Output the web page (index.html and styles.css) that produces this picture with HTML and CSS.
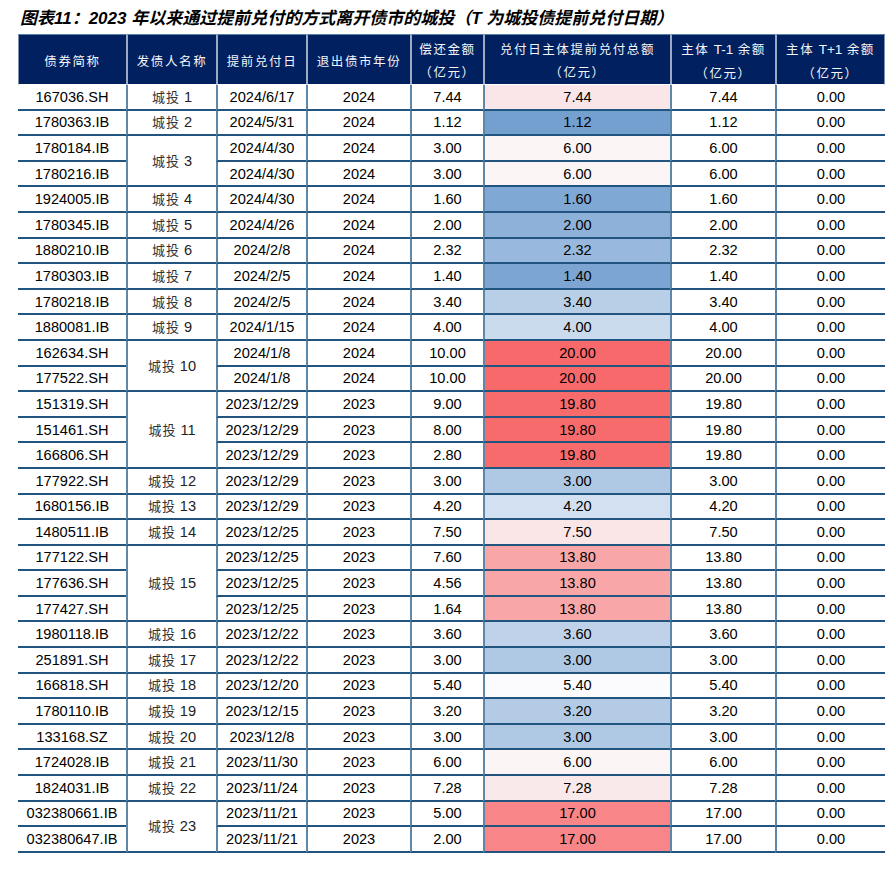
FILE: index.html
```html
<!DOCTYPE html>
<html lang="zh-CN">
<head>
<meta charset="utf-8">
<title>图表11</title>
<link rel="stylesheet" href="styles.css">
</head>
<body>
<div class="page">
<h1 class="title">图表11：2023 年以来通过提前兑付的方式离开债市的城投（T 为城投债提前兑付日期）</h1>
<table class="grid">
<colgroup>
<col class="w1"><col class="w2"><col class="w3"><col class="w4"><col class="w5"><col class="w6"><col class="w7"><col class="w8">
</colgroup>
<thead>
<tr>
<th>债券简称</th><th>发债人名称</th><th>提前兑付日</th><th>退出债市年份</th>
<th>偿还金额<br>（亿元）</th><th>兑付日主体提前兑付总额<br>（亿元）</th><th>主体 <span class="lat">T-1</span> 余额<br>（亿元）</th><th>主体 <span class="lat">T+1</span> 余额<br>（亿元）</th>
</tr>
</thead>
<tbody>
<tr><td class="first">167036.SH</td><td class="iss">城投 <span class="lat">1</span></td><td>2024/6/17</td><td>2024</td><td>7.44</td><td class="c744">7.44</td><td>7.44</td><td>0.00</td></tr>
<tr><td class="first">1780363.IB</td><td class="iss">城投 <span class="lat">2</span></td><td>2024/5/31</td><td>2024</td><td>1.12</td><td class="c112">1.12</td><td>1.12</td><td>0.00</td></tr>
<tr><td class="first">1780184.IB</td><td class="iss" rowspan="2">城投 <span class="lat">3</span></td><td>2024/4/30</td><td>2024</td><td>3.00</td><td class="c600">6.00</td><td>6.00</td><td>0.00</td></tr>
<tr><td class="first">1780216.IB</td><td>2024/4/30</td><td>2024</td><td>3.00</td><td class="c600">6.00</td><td>6.00</td><td>0.00</td></tr>
<tr><td class="first">1924005.IB</td><td class="iss">城投 <span class="lat">4</span></td><td>2024/4/30</td><td>2024</td><td>1.60</td><td class="c160">1.60</td><td>1.60</td><td>0.00</td></tr>
<tr><td class="first">1780345.IB</td><td class="iss">城投 <span class="lat">5</span></td><td>2024/4/26</td><td>2024</td><td>2.00</td><td class="c200">2.00</td><td>2.00</td><td>0.00</td></tr>
<tr><td class="first">1880210.IB</td><td class="iss">城投 <span class="lat">6</span></td><td>2024/2/8</td><td>2024</td><td>2.32</td><td class="c232">2.32</td><td>2.32</td><td>0.00</td></tr>
<tr><td class="first">1780303.IB</td><td class="iss">城投 <span class="lat">7</span></td><td>2024/2/5</td><td>2024</td><td>1.40</td><td class="c140">1.40</td><td>1.40</td><td>0.00</td></tr>
<tr><td class="first">1780218.IB</td><td class="iss">城投 <span class="lat">8</span></td><td>2024/2/5</td><td>2024</td><td>3.40</td><td class="c340">3.40</td><td>3.40</td><td>0.00</td></tr>
<tr><td class="first">1880081.IB</td><td class="iss">城投 <span class="lat">9</span></td><td>2024/1/15</td><td>2024</td><td>4.00</td><td class="c400">4.00</td><td>4.00</td><td>0.00</td></tr>
<tr><td class="first">162634.SH</td><td class="iss" rowspan="2">城投 <span class="lat">10</span></td><td>2024/1/8</td><td>2024</td><td>10.00</td><td class="c2000">20.00</td><td>20.00</td><td>0.00</td></tr>
<tr><td class="first">177522.SH</td><td>2024/1/8</td><td>2024</td><td>10.00</td><td class="c2000">20.00</td><td>20.00</td><td>0.00</td></tr>
<tr><td class="first">151319.SH</td><td class="iss" rowspan="3">城投 <span class="lat">11</span></td><td>2023/12/29</td><td>2023</td><td>9.00</td><td class="c1980">19.80</td><td>19.80</td><td>0.00</td></tr>
<tr><td class="first">151461.SH</td><td>2023/12/29</td><td>2023</td><td>8.00</td><td class="c1980">19.80</td><td>19.80</td><td>0.00</td></tr>
<tr><td class="first">166806.SH</td><td>2023/12/29</td><td>2023</td><td>2.80</td><td class="c1980">19.80</td><td>19.80</td><td>0.00</td></tr>
<tr><td class="first">177922.SH</td><td class="iss">城投 <span class="lat">12</span></td><td>2023/12/29</td><td>2023</td><td>3.00</td><td class="c300">3.00</td><td>3.00</td><td>0.00</td></tr>
<tr><td class="first">1680156.IB</td><td class="iss">城投 <span class="lat">13</span></td><td>2023/12/29</td><td>2023</td><td>4.20</td><td class="c420">4.20</td><td>4.20</td><td>0.00</td></tr>
<tr><td class="first">1480511.IB</td><td class="iss">城投 <span class="lat">14</span></td><td>2023/12/25</td><td>2023</td><td>7.50</td><td class="c750">7.50</td><td>7.50</td><td>0.00</td></tr>
<tr><td class="first">177122.SH</td><td class="iss" rowspan="3">城投 <span class="lat">15</span></td><td>2023/12/25</td><td>2023</td><td>7.60</td><td class="c1380">13.80</td><td>13.80</td><td>0.00</td></tr>
<tr><td class="first">177636.SH</td><td>2023/12/25</td><td>2023</td><td>4.56</td><td class="c1380">13.80</td><td>13.80</td><td>0.00</td></tr>
<tr><td class="first">177427.SH</td><td>2023/12/25</td><td>2023</td><td>1.64</td><td class="c1380">13.80</td><td>13.80</td><td>0.00</td></tr>
<tr><td class="first">1980118.IB</td><td class="iss">城投 <span class="lat">16</span></td><td>2023/12/22</td><td>2023</td><td>3.60</td><td class="c360">3.60</td><td>3.60</td><td>0.00</td></tr>
<tr><td class="first">251891.SH</td><td class="iss">城投 <span class="lat">17</span></td><td>2023/12/22</td><td>2023</td><td>3.00</td><td class="c300">3.00</td><td>3.00</td><td>0.00</td></tr>
<tr><td class="first">166818.SH</td><td class="iss">城投 <span class="lat">18</span></td><td>2023/12/20</td><td>2023</td><td>5.40</td><td class="c540">5.40</td><td>5.40</td><td>0.00</td></tr>
<tr><td class="first">1780110.IB</td><td class="iss">城投 <span class="lat">19</span></td><td>2023/12/15</td><td>2023</td><td>3.20</td><td class="c320">3.20</td><td>3.20</td><td>0.00</td></tr>
<tr><td class="first">133168.SZ</td><td class="iss">城投 <span class="lat">20</span></td><td>2023/12/8</td><td>2023</td><td>3.00</td><td class="c300">3.00</td><td>3.00</td><td>0.00</td></tr>
<tr><td class="first">1724028.IB</td><td class="iss">城投 <span class="lat">21</span></td><td>2023/11/30</td><td>2023</td><td>6.00</td><td class="c600">6.00</td><td>6.00</td><td>0.00</td></tr>
<tr><td class="first">1824031.IB</td><td class="iss">城投 <span class="lat">22</span></td><td>2023/11/24</td><td>2023</td><td>7.28</td><td class="c728">7.28</td><td>7.28</td><td>0.00</td></tr>
<tr><td class="first">032380661.IB</td><td class="iss" rowspan="2">城投 <span class="lat">23</span></td><td>2023/11/21</td><td>2023</td><td>5.00</td><td class="c1700">17.00</td><td>17.00</td><td>0.00</td></tr>
<tr><td class="first">032380647.IB</td><td>2023/11/21</td><td>2023</td><td>2.00</td><td class="c1700">17.00</td><td>17.00</td><td>0.00</td></tr>
</tbody>
</table>
</div>
</body>
</html>
```
FILE: styles.css
```css
html, body {
  margin: 0;
  padding: 0;
  background: #ffffff;
}
.page {
  padding: 8px 0 0 18px;
}
.title {
  margin: 0 0 0 2px;
  height: 26px;
  font-family: "Liberation Sans", "Noto Sans CJK SC", sans-serif;
  font-size: 17px;
  line-height: 21px;
  font-weight: bold;
  font-style: italic;
  color: #000;
  white-space: nowrap;
}
.grid {
  border-collapse: separate;
  border-spacing: 0;
  table-layout: fixed;
  width: 867px;
  font-family: "Liberation Sans", "Noto Sans CJK SC", sans-serif;
}
.w1 { width: 108px; }
.w2 { width: 90px; }
.w3 { width: 90px; }
.w4 { width: 104px; }
.w5 { width: 73px; }
.w6 { width: 187px; }
.w7 { width: 105px; }
.w8 { width: 110px; }

.grid th {
  background: #002060;
  color: #f4f6fa;
  font-family: "Noto Sans CJK SC", sans-serif;
  font-weight: normal;
  font-size: 12.5px;
  letter-spacing: 1.6px;
  line-height: 23px;
  height: 51px;
  padding: 1px 0 0;
  box-sizing: border-box;
  border-top: 1px solid #5d7fa3;
  border-bottom: 1px solid #ffffff;
  border-left: 2px solid #9aabc2;
  text-align: center;
  vertical-align: middle;
}
.grid th:first-child {
  border-left: 1px solid #7d93b0;
}
.grid th:last-child {
  border-right: 1px solid #7d93b0;
}
.grid th .lat {
  font-family: "Liberation Sans", sans-serif;
  letter-spacing: 0;
  font-size: 13.5px;
}
.grid tbody tr {
  height: 25.6px;
}
.grid td {
  padding: 0;
  font-size: 14.6px;
  color: #000;
  text-align: center;
  vertical-align: middle;
  border-bottom: 2px solid #21557f;
  border-left: 2px solid #5f88a8;
  line-height: 20px;
  white-space: nowrap;
}
.grid td.first {
  border-left: none;
}
.grid td.iss {
  font-family: "Noto Sans CJK SC", sans-serif;
  font-size: 13px;
  color: #333;
  letter-spacing: 1px;
}
.grid td.iss .lat {
  font-family: "Liberation Sans", sans-serif;
  font-size: 14.6px;
  letter-spacing: 0;
  color: #222;
}

.c112 { background: #74a0d0; }
.c140 { background: #7ca5d3; }
.c160 { background: #80a8d4; }
.c200 { background: #8db1d9; }
.c232 { background: #98b9dd; }
.c300 { background: #afc8e4; }
.c320 { background: #b4cbe6; }
.c340 { background: #b9cfe8; }
.c360 { background: #bfd2e9; }
.c400 { background: #cbdbee; }
.c420 { background: #d3e0f1; }
.c540 { background: #fbfbfe; }
.c600 { background: #fbf5f6; }
.c728 { background: #fae9eb; }
.c744 { background: #fae6e8; }
.c750 { background: #fae5e7; }
.c1380 { background: #f9a6a8; }
.c1700 { background: #f88688; }
.c1980 { background: #f86b6d; }
.c2000 { background: #f8696b; }
```
